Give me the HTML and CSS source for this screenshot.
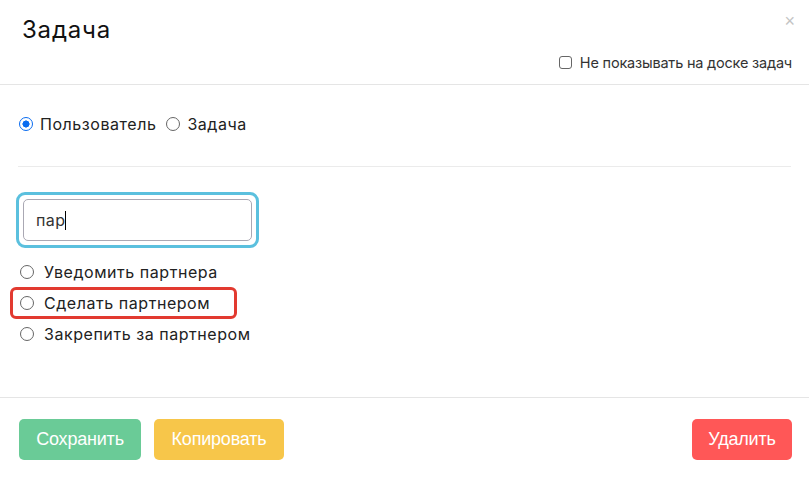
FILE: index.html
```html
<!DOCTYPE html>
<html lang="ru">
<head>
<meta charset="utf-8">
<link rel="stylesheet" href="styles.css">
</head>
<body>
<div class="modal">
  <div class="header">
    <div class="title-row">
      <h1 class="title">Задача</h1>
      <span class="close">×</span>
    </div>
    <label class="hide-opt"><span class="checkbox"></span>Не показывать на доске задач</label>
  </div>
  <div class="body">
    <div class="type-row">
      <label class="radio-label"><span class="radio checked"></span>Пользователь</label>
      <label class="radio-label"><span class="radio"></span>Задача</label>
    </div>
    <div class="divider"></div>
    <div class="input-ring">
      <div class="input"><span class="value">пар</span><span class="caret"></span></div>
    </div>
    <div class="options">
      <label class="opt"><span class="radio"></span>Уведомить партнера</label>
      <label class="opt highlight"><span class="radio"></span>Сделать партнером</label>
      <label class="opt"><span class="radio"></span>Закрепить за партнером</label>
    </div>
  </div>
  <div class="footer">
    <button class="btn green">Сохранить</button>
    <button class="btn yellow">Копировать</button>
    <span class="spacer"></span>
    <button class="btn red">Удалить</button>
  </div>
</div>
</body>
</html>
```
FILE: styles.css
```css
* { box-sizing: border-box; }
html, body { margin: 0; padding: 0; background: #fff; }
body { font-family: Inter, "Noto Sans", sans-serif; color: #222; width: 809px; height: 481px; overflow: hidden; }
.modal { display: flex; flex-direction: column; height: 481px; }
.header { border-bottom: 1px solid #e5e5e5; height: 85px; padding: 0 17px 0 22px; display: flex; flex-direction: column; }
.title-row { display: flex; justify-content: space-between; align-items: flex-start; }
.title { margin: 15px 0 0; font-size: 24px; font-weight: 400; color: #111; line-height: 30px; letter-spacing: 0.8px; }
.close { font-family: "Liberation Sans", sans-serif; font-size: 18px; color: #c4c4c4; margin-top: 11px; margin-right: -3px; line-height: 20px; }
.hide-opt { align-self: flex-end; display: flex; align-items: center; font-size: 14.5px; color: #333; margin-top: 9px; letter-spacing: -0.2px; }
.checkbox { width: 13px; height: 13px; border: 1px solid #666; border-radius: 3px; margin-right: 8px; display: inline-block; }
.body { padding: 0 18px; flex: 1; }
.type-row { display: flex; gap: 10px; margin-top: 30px; height: 18px; align-items: center; }
.radio-label, .opt { display: flex; align-items: center; font-size: 16px; color: #222; letter-spacing: 0.55px; white-space: nowrap; }
.radio { width: 14px; height: 14px; border: 1px solid #666; border-radius: 50%; display: inline-block; margin-right: 7px; flex: none; }
.radio.checked { border: 1.5px solid #0a6cf0; background: radial-gradient(circle, #0a6cf0 0 3.3px, #fff 3.8px); }
.type-row .radio-label:first-child .radio { margin-left: 1px; }
.divider { height: 1px; background: #ebebeb; margin-top: 33px; }
.input-ring { margin-top: 25px; margin-left: -2px; width: 243px; height: 56px; border: 3px solid #5bc0de; border-radius: 9px; padding: 4px; }
.input { height: 42px; border: 1px solid #aaa8b3; border-radius: 5px; display: flex; align-items: center; padding-left: 12px; font-size: 16px; color: #333; letter-spacing: 0.4px; }
.caret { width: 1px; height: 19px; background: #000; }
.options { margin-top: 8px; display: flex; flex-direction: column; align-items: flex-start; margin-left: -8px; }
.opt { height: 32px; padding-left: 8px; border: 3px solid transparent; border-radius: 6px; min-width: 227px; margin-bottom: -1px; }
.opt .radio { margin-right: 10px; margin-left: -1px; margin-top: -1px; }
.opt.highlight { border-color: #e23a30; width: 227px; }
.footer { border-top: 1px solid #e5e5e5; height: 84px; display: flex; align-items: center; padding: 0 17px 0 19px; }
.btn { font-family: "Liberation Sans", Arial, sans-serif; font-size: 18px; color: #fff; border: 0; border-radius: 5px; height: 41px; padding: 0; letter-spacing: -0.2px; }
.green { background: #6acb97; width: 122px; }
.yellow { background: #f7c64a; margin-left: 13px; width: 130px; }
.red { background: #ff5757; width: 100px; }
.spacer { flex: 1; }
```
